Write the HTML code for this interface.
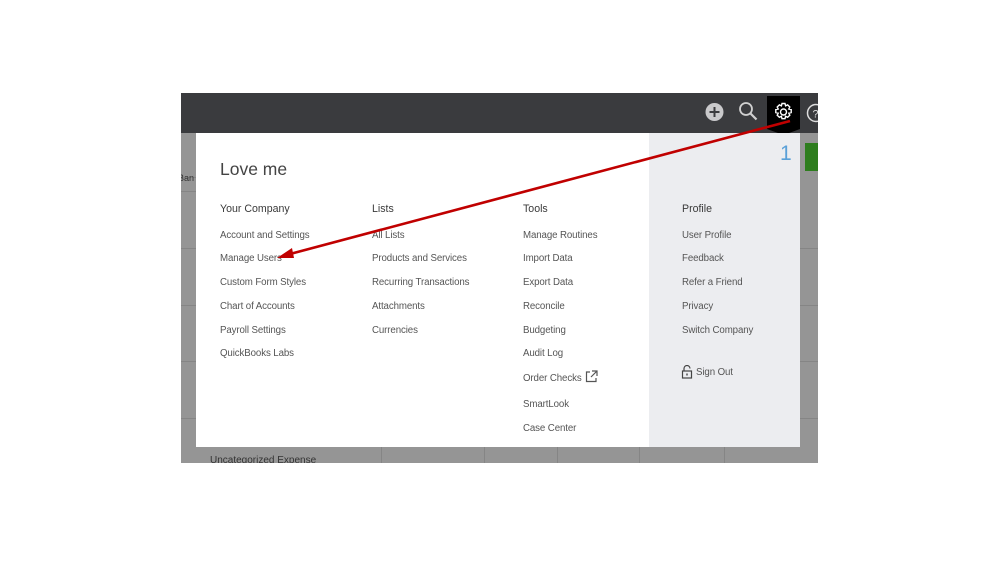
<!DOCTYPE html>
<html><head><meta charset="utf-8">
<style>
*{margin:0;padding:0;box-sizing:border-box}
body{width:999px;height:562px;background:#fff;position:relative;overflow:hidden;font-family:"Liberation Sans",sans-serif}
.app{position:absolute;left:181px;top:93px;width:637px;height:370px;background:#959595;overflow:hidden}
.hdr{position:absolute;left:0;top:0;width:637px;height:40px;background:#3a3b3e}
.gl{position:absolute;background:#858585}
.menu{position:absolute;left:196px;top:133px;width:604px;height:314px;background:#fff}
.side{position:absolute;left:649px;top:133px;width:151px;height:314px;background:#ecedf0}
.t{position:absolute;font-size:9.7px;color:#555;white-space:nowrap;letter-spacing:-0.1px;margin-top:1px}
.h{position:absolute;font-size:10.6px;color:#3a3a3a;white-space:nowrap;margin-top:2px}
</style></head><body>
<div class="app">
  <div class="hdr"></div>
  <div class="gl" style="left:0;top:84px;width:15px;height:1px"></div>
  <div class="gl" style="left:0;top:98px;width:15px;height:1px"></div>
  <div class="gl" style="left:0;top:155px;width:15px;height:1px"></div>
  <div class="gl" style="left:0;top:212px;width:15px;height:1px"></div>
  <div class="gl" style="left:0;top:268px;width:15px;height:1px"></div>
  <div class="gl" style="left:0;top:325px;width:15px;height:1px"></div>
  <div class="gl" style="left:619px;top:155px;width:18px;height:1px"></div>
  <div class="gl" style="left:619px;top:212px;width:18px;height:1px"></div>
  <div class="gl" style="left:619px;top:268px;width:18px;height:1px"></div>
  <div class="gl" style="left:619px;top:325px;width:18px;height:1px"></div>
  <div class="gl" style="left:200px;top:354px;width:1px;height:16px"></div>
  <div class="gl" style="left:303px;top:354px;width:1px;height:16px"></div>
  <div class="gl" style="left:376px;top:354px;width:1px;height:16px"></div>
  <div class="gl" style="left:458px;top:354px;width:1px;height:16px"></div>
  <div class="gl" style="left:543px;top:354px;width:1px;height:16px"></div>
  <div style="position:absolute;left:-3px;top:80px;font-size:9px;color:#333">Ban</div>
  <div style="position:absolute;left:29px;top:362px;font-size:10px;color:#333">Uncategorized Expense</div>
  <div style="position:absolute;left:624px;top:50px;width:13px;height:28px;background:#2e7d1e"></div>
</div>
<svg style="position:absolute;left:700px;top:96px" width="118" height="40">
  <circle cx="14.5" cy="16" r="9" fill="#c9c9cb"/>
  <path d="M14.5 11v10M9.5 16h10" stroke="#3a3b3e" stroke-width="2"/>
  <circle cx="46" cy="13" r="6" fill="none" stroke="#d0d0d0" stroke-width="1.8"/>
  <path d="M50.5 17.5l6 6" stroke="#d0d0d0" stroke-width="2.2"/>
  <path d="M67 -3h33v36l-16.5 6-16.5-6z" fill="#000"/>
  <g transform="translate(83.5 16)" fill="none" stroke="#fff" stroke-width="1.4">
    <circle r="3"/>
    <path d="M-1.5-8.5h3l.6 2.4 2-1 2.2 2.1-1 2 2.4.6v3l-2.4.6 1 2-2.2 2.1-2-1-.6 2.4h-3l-.6-2.4-2 1-2.2-2.1 1-2-2.4-.6v-3l2.4-.6-1-2 2.2-2.1 2 1z"/>
  </g>
  <circle cx="116" cy="17" r="8.5" fill="none" stroke="#ddd" stroke-width="1.5"/>
  <text x="112.5" y="21.5" font-size="11" fill="#ddd" font-family="Liberation Sans">?</text>
</svg>
<div class="menu"></div>
<div class="side"></div>
<div style="position:absolute;left:780px;top:142px;font-size:21px;color:#5aa0d8">1</div>
<div style="position:absolute;left:220px;top:159px;font-size:17.5px;color:#444">Love me</div>
<div class="h" style="left:220px;top:201px">Your Company</div>
<div class="t" style="left:220px;top:229px">Account and Settings</div>
<div class="t" style="left:220px;top:252px">Manage Users</div>
<div class="t" style="left:220px;top:276px">Custom Form Styles</div>
<div class="t" style="left:220px;top:300px">Chart of Accounts</div>
<div class="t" style="left:220px;top:324px">Payroll Settings</div>
<div class="t" style="left:220px;top:347px">QuickBooks Labs</div>
<div class="h" style="left:372px;top:201px">Lists</div>
<div class="t" style="left:372px;top:229px">All Lists</div>
<div class="t" style="left:372px;top:252px">Products and Services</div>
<div class="t" style="left:372px;top:276px">Recurring Transactions</div>
<div class="t" style="left:372px;top:300px">Attachments</div>
<div class="t" style="left:372px;top:324px">Currencies</div>
<div class="h" style="left:523px;top:201px">Tools</div>
<div class="t" style="left:523px;top:229px">Manage Routines</div>
<div class="t" style="left:523px;top:252px">Import Data</div>
<div class="t" style="left:523px;top:276px">Export Data</div>
<div class="t" style="left:523px;top:300px">Reconcile</div>
<div class="t" style="left:523px;top:324px">Budgeting</div>
<div class="t" style="left:523px;top:347px">Audit Log</div>
<div class="t" style="left:523px;top:372px">Order Checks</div>
<svg style="position:absolute;left:585px;top:370px" width="13" height="13"><path d="M5 2H1.5v9.5H11V8M7 1h5v5M12 1L6 7" fill="none" stroke="#555" stroke-width="1.2"/></svg>
<div class="t" style="left:523px;top:398px">SmartLook</div>
<div class="t" style="left:523px;top:422px">Case Center</div>
<div class="h" style="left:682px;top:201px">Profile</div>
<div class="t" style="left:682px;top:229px">User Profile</div>
<div class="t" style="left:682px;top:252px">Feedback</div>
<div class="t" style="left:682px;top:276px">Refer a Friend</div>
<div class="t" style="left:682px;top:300px">Privacy</div>
<div class="t" style="left:682px;top:324px">Switch Company</div>
<svg style="position:absolute;left:681px;top:365px" width="12" height="14"><path d="M3 6V3.5a3 3 0 0 1 6 0" fill="none" stroke="#444" stroke-width="1.2"/><rect x="1.5" y="6" width="9" height="7" fill="none" stroke="#444" stroke-width="1.2"/><rect x="5.3" y="8.5" width="1.4" height="2" fill="#444"/></svg>
<div class="t" style="left:696px;top:366px">Sign Out</div>
<svg style="position:absolute;left:0;top:0" width="999" height="562">
  <path d="M790 121L290 254" stroke="#c00000" stroke-width="2.6"/>
  <path d="M277 258L292 248L294 258z" fill="#c00000"/>
</svg>
</body></html>
